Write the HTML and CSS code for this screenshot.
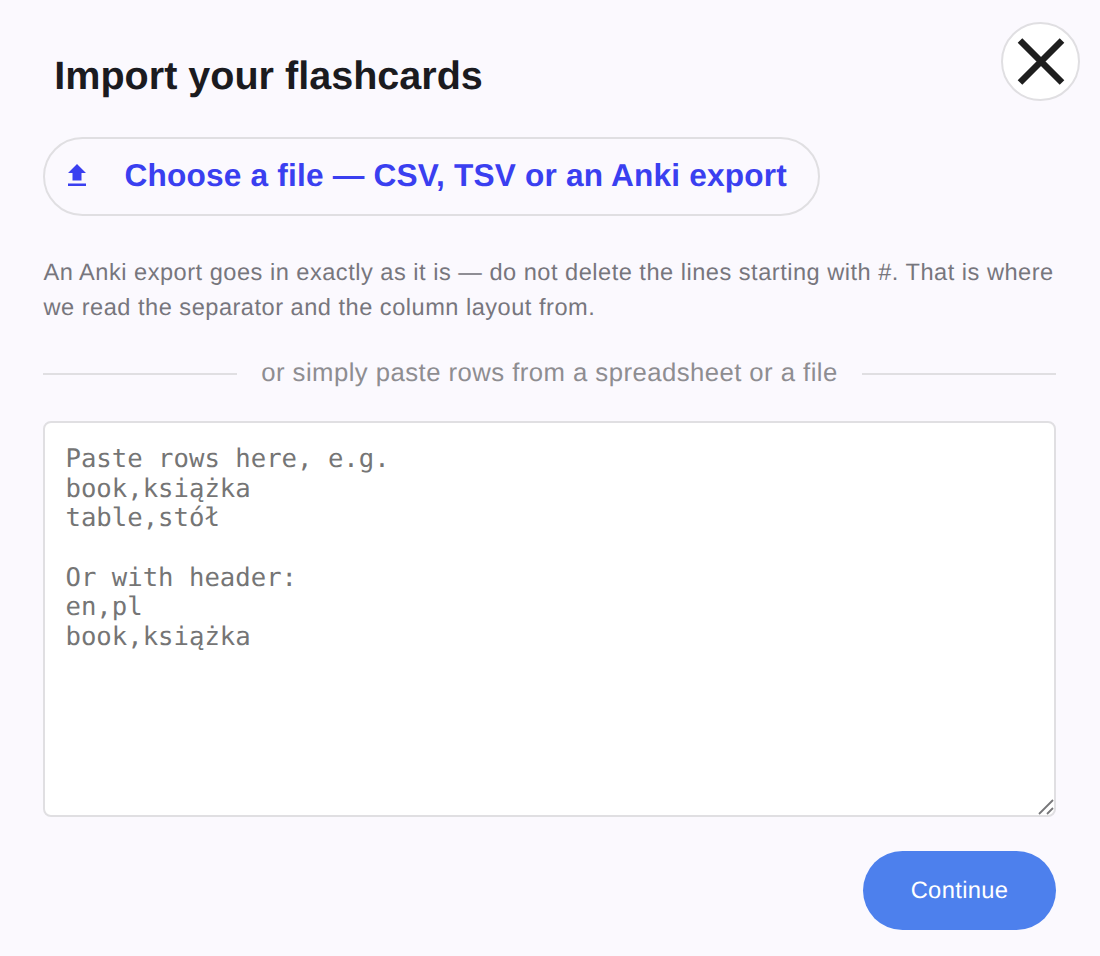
FILE: index.html
```html
<!DOCTYPE html>
<html lang="en">
<head>
<meta charset="utf-8">
<title>Import your flashcards</title>
<link rel="stylesheet" href="styles.css">
</head>
<body>
<main class="dialog">
  <header class="header">
    <h1 class="title">Import your flashcards</h1>
    <button class="close" aria-label="Close">
      <svg class="close-icon" viewBox="0 0 46 46"><path d="M2 1.500L44 43.500M44 1.500L2 43.500"/></svg>
    </button>
  </header>
  <button class="choose">
    <svg class="upload-icon" viewBox="0 0 20 24"><path d="M10 0L19 9H14.500V16.500H5.500V9H1zM1 19.500H19V22H1z"/></svg>
    <span>Choose a file — CSV, TSV or an Anki export</span>
  </button>
  <p class="hint">An Anki export goes in exactly as it is — do not delete the lines starting with #. That is where we read the separator and the column layout from.</p>
  <div class="divider"><span>or simply paste rows from a spreadsheet or a file</span></div>
  <div class="field">
    <textarea class="rows" placeholder="Paste rows here, e.g.&#10;book,książka&#10;table,stół&#10;&#10;Or with header:&#10;en,pl&#10;book,książka"></textarea>
    <svg class="grip" viewBox="0 0 16 16"><path d="M1 15L15 1M9 15L15 9"/></svg>
  </div>
  <footer class="footer"><button class="continue">Continue</button></footer>
</main>
</body>
</html>
```

FILE: styles.css
```css
* { box-sizing: border-box; }
body {
  margin: 0;
  background: #fbf9fe;
  font-family: "Liberation Sans", Arial, sans-serif;
  text-rendering: geometricPrecision;
}
button { font-family: inherit; margin: 0; text-rendering: inherit; }
.dialog {
  width: 1100px;
  height: 956px;
  padding: 22px 44px 0 43px;
  display: flex;
  flex-direction: column;
  overflow: hidden;
}
.header {
  display: flex;
  justify-content: space-between;
  align-items: flex-start;
  height: 115px;
  margin-right: -24px;
  padding-left: 11.3px;
}
.title {
  margin: 30px 0 0;
  font-size: 39.55px;
  line-height: 48px;
  font-weight: 700;
  color: #1b1b1f;
}
.close {
  display: grid;
  place-items: center;
  width: 79px;
  height: 79px;
  padding: 0;
  border: 2px solid #e0dfe2;
  border-radius: 50%;
  background: #fff;
}
.close-icon {
  width: 46px;
  height: 46px;
  fill: none;
  stroke: #1e1e1e;
  stroke-width: 6.5;
  overflow: visible;
}
.choose {
  display: flex;
  align-items: center;
  align-self: flex-start;
  width: 777px;
  height: 79px;
  padding: 0 0 2px 22px;
  gap: 37.5px;
  border: 2px solid #e0dfe2;
  border-radius: 40px;
  background: transparent;
  color: #3a3ff0;
  font-size: 31.63px;
  font-weight: 700;
  letter-spacing: 0.18px;
  white-space: nowrap;
}
.upload-icon {
  width: 20px;
  height: 24px;
  fill: currentColor;
}
.hint {
  margin: 40px 0 0;
  padding-left: 0.5px;
  font-size: 23.6px;
  line-height: 35px;
  letter-spacing: 0.5px;
  color: #77767d;
}
.divider {
  display: flex;
  align-items: center;
  gap: 24px;
  margin-top: 33px;
  height: 30px;
  font-size: 25.7px;
  line-height: 30px;
  letter-spacing: 0.46px;
  color: #8e8d91;
  white-space: nowrap;
}
.divider span { padding-bottom: 2px; }
.divider::before,
.divider::after {
  content: "";
  flex: 1;
  height: 2px;
  background: #e0dfe2;
}
.field {
  position: relative;
  margin-top: 32px;
  height: 396px;
}
.rows {
  display: block;
  width: 100%;
  height: 100%;
  margin: 0;
  padding: 22px 20.5px 20px;
  border: 2px solid #e0dfe2;
  border-radius: 8px;
  background: #fff;
  resize: none;
  font-family: "DejaVu Sans Mono", monospace;
  font-size: 25.65px;
  line-height: 29.65px;
  text-rendering: inherit;
}
.rows::placeholder { color: #757575; }
.grip {
  position: absolute;
  right: 2px;
  bottom: 2px;
  width: 16px;
  height: 16px;
  fill: none;
  stroke: #77777a;
  stroke-width: 1.8;
}
.footer {
  display: flex;
  justify-content: flex-end;
  margin-top: 34px;
}
.continue {
  width: 193px;
  height: 79px;
  padding: 2px 0 0;
  border: 0;
  border-radius: 40px;
  background: #4d80ed;
  color: #fff;
  font-size: 23.72px;
  letter-spacing: 0.35px;
}
```
